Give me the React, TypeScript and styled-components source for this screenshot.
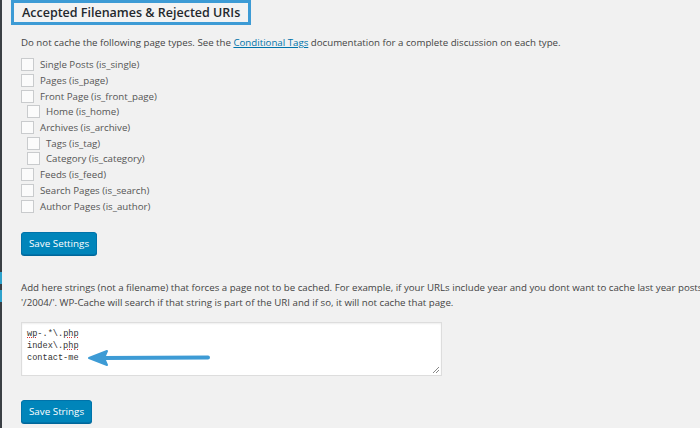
import React from "react";
import styled, { createGlobalStyle } from "styled-components";

const Global = createGlobalStyle`
  html, body { margin: 0; padding: 0; background: #f1f1f1; overflow: hidden; }
  body { font-family: "Open Sans", "Noto Sans", sans-serif; color: #444; }
  * { box-sizing: border-box; }
`;

const Page = styled.div`
  display: flex;
  width: 700px;
  height: 428px;
  overflow: hidden;
  background: #f1f1f1;
`;

const AdminEdge = styled.div`
  width: 2px;
  flex-shrink: 0;
  background: #3a3f44;
  display: flex;
  flex-direction: column;
  gap: 6px;
  padding-top: 272px;
`;

const EdgeMark = styled.div`
  height: 12px;
  background: #2ea2cc;
`;

const Main = styled.main`
  flex: 1;
  min-width: 0;
  padding-left: 19px;
  display: flex;
  flex-direction: column;
  align-items: flex-start;
`;

const TitleBox = styled.h3`
  margin: 0 0 0 -10px;
  border: 3px solid #3d9bd5;
  padding: 0 8px 0 8px;
  height: 25px;
  font-size: 12.5px;
  font-weight: 600;
  line-height: 19px;
  color: #23282d;
  background: #f3f3f3;
`;

const Text = styled.p<{ $mt: number }>`
  margin: ${(p) => p.$mt}px 0 0;
  font-size: 9.7px;
  line-height: 15px;
  color: #444;
  white-space: nowrap;
`;

const DocLink = styled.a`
  color: #0073aa;
  text-decoration: underline;
`;

const CheckList = styled.ul`
  list-style: none;
  margin: 7px 0 0;
  padding: 0;
  display: grid;
  grid-auto-rows: 15.7px;
`;

const CheckRow = styled.li<{ $indent: boolean }>`
  display: flex;
  align-items: center;
  padding-left: ${(p) => (p.$indent ? 6 : 0)}px;
  font-size: 9.7px;
  color: #555;
  white-space: nowrap;
`;

const Box = styled.span`
  width: 13px;
  height: 13px;
  border: 1px solid #c9cbcd;
  background: #fbfbfb;
  margin-right: 6px;
  flex-shrink: 0;
`;

const Button = styled.button<{ $mt: number }>`
  margin-top: ${(p) => p.$mt}px;
  height: 23px;
  padding: 0 7px;
  font-family: "Open Sans", "Noto Sans", sans-serif;
  font-size: 9.8px;
  color: #fff;
  background: #0085ba;
  border: 1px solid #0073aa;
  border-radius: 3px;
  box-shadow: 0 1px 0 #006799;
  cursor: pointer;
`;

const AreaWrap = styled.div`
  position: relative;
  margin-top: 12px;
  width: 421px;
  height: 54px;
`;

const Area = styled.div`
  width: 100%;
  height: 100%;
  background: #fff;
  border: 1px solid #ddd;
  box-shadow: inset 0 1px 2px rgba(0, 0, 0, 0.07);
  padding: 5px 5px;
  font-family: "Liberation Mono", "DejaVu Sans Mono", monospace;
  font-size: 8.6px;
  line-height: 12px;
  color: #333;
  white-space: pre;
`;

const Misspelled = styled.span`
  text-decoration: underline dotted #d33;
  text-decoration-thickness: 1px;
  text-underline-offset: 1px;
`;

const Grip = styled.svg`
  position: absolute;
  right: 2px;
  bottom: 2px;
`;

const Arrow = styled.svg`
  position: absolute;
  left: 64px;
  top: 26px;
`;

export default function App() {
  const items: [string, boolean][] = [
    ["Single Posts (is_single)", false],
    ["Pages (is_page)", false],
    ["Front Page (is_front_page)", false],
    ["Home (is_home)", true],
    ["Archives (is_archive)", false],
    ["Tags (is_tag)", true],
    ["Category (is_category)", true],
    ["Feeds (is_feed)", false],
    ["Search Pages (is_search)", false],
    ["Author Pages (is_author)", false],
  ];
  return (
    <Page>
      <Global />
      <AdminEdge>
        <EdgeMark />
        <EdgeMark />
      </AdminEdge>
      <Main>
        <TitleBox>Accepted Filenames &amp; Rejected URIs</TitleBox>
        <Text $mt={10}>
          Do not cache the following page types. See the <DocLink>Conditional Tags</DocLink> documentation for a
          complete discussion on each type.
        </Text>
        <CheckList>
          {items.map(([label, indent]) => (
            <CheckRow key={label} $indent={indent}>
              <Box />
              {label}
            </CheckRow>
          ))}
        </CheckList>
        <Button $mt={18}>Save Settings</Button>
        <Text $mt={25}>
          Add here strings (not a filename) that forces a page not to be cached. For example, if your URLs include
          year and you dont want to cache last year posts, it's enough to specify the year, i.e.
          <br />
          '/2004/'. WP-Cache will search if that string is part of the URI and if so, it will not cache that page.
        </Text>
        <AreaWrap>
          <Area>
            <Misspelled>wp</Misspelled>-.*\.<Misspelled>php</Misspelled>
            {"\n"}index\.<Misspelled>php</Misspelled>
            {"\n"}contact-me
          </Area>
          <Grip width="8" height="8" viewBox="0 0 8 8">
            <path d="M1 7 L7 1 M4 7 L7 4" stroke="#888" strokeWidth="1" />
          </Grip>
          <Arrow width="130" height="20" viewBox="0 0 130 20">
            <path d="M4 10 L22 3 L19 10 L22 17 Z" fill="#3d9bd5" stroke="#3d9bd5" strokeWidth="2" strokeLinejoin="round" />
            <line x1="18" y1="10" x2="123" y2="9.5" stroke="#3d9bd5" strokeWidth="4" strokeLinecap="round" />
          </Arrow>
        </AreaWrap>
        <Button $mt={24}>Save Strings</Button>
      </Main>
    </Page>
  );
}
